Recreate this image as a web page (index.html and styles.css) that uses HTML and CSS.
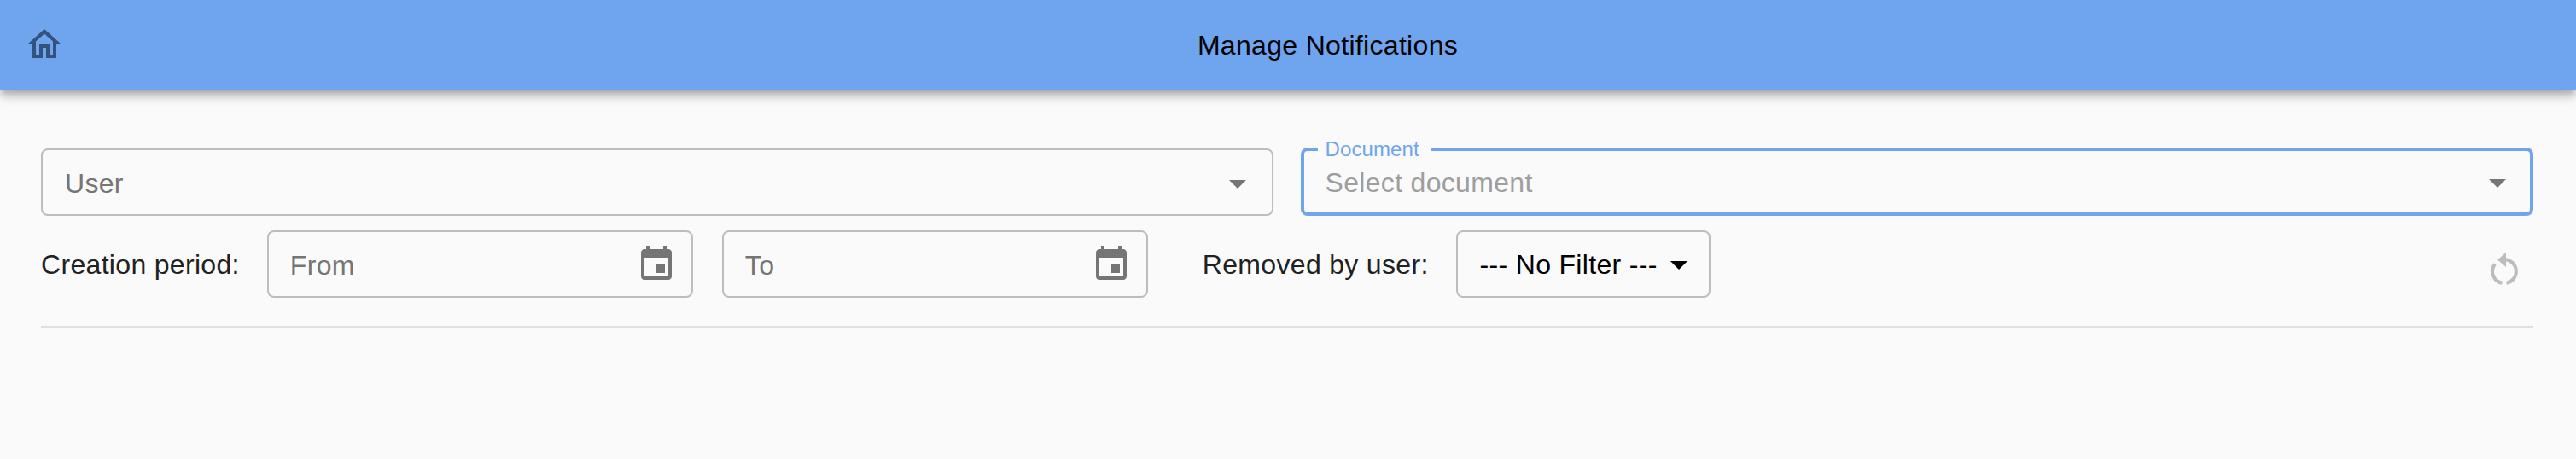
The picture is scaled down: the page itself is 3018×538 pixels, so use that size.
FILE: index.html
```html
<!DOCTYPE html>
<html lang="en">
<head>
<meta charset="utf-8">
<title>Manage Notifications</title>
<link rel="stylesheet" href="styles.css">
</head>
<body>
<header class="toolbar">
  <a class="home" href="#" aria-label="Home">
    <svg class="icon" viewBox="0 0 24 24"><path d="M12 5.69l5 4.5V18h-2v-6H9v6H7v-7.81l5-4.5M12 3L2 12h3v8h6v-6h2v6h6v-8h3L12 3z"/></svg>
  </a>
  <h1 class="title">Manage Notifications</h1>
</header>
<main class="content">
  <div class="row-selects">
    <div class="field">
      <span class="value">User</span>
      <svg class="icon arrow" viewBox="0 0 24 24"><path d="M7 10l5 5 5-5z"/></svg>
    </div>
    <div class="field focused">
      <span class="float-label">Document</span>
      <span class="value faint">Select document</span>
      <svg class="icon arrow" viewBox="0 0 24 24"><path d="M7 10l5 5 5-5z"/></svg>
    </div>
  </div>
  <div class="row-filters">
    <span class="label">Creation period:</span>
    <div class="field date">
      <span class="value">From</span>
      <svg class="icon calendar" viewBox="0 0 24 24"><path d="M17 12h-5v5h5v-5zM16 1v2H8V1H6v2H5c-1.11 0-1.99.9-1.99 2L3 19c0 1.1.89 2 2 2h14c1.1 0 2-.9 2-2V5c0-1.1-.9-2-2-2h-1V1h-2zm3 18H5V8h14v11z"/></svg>
    </div>
    <div class="field date">
      <span class="value">To</span>
      <svg class="icon calendar" viewBox="0 0 24 24"><path d="M17 12h-5v5h5v-5zM16 1v2H8V1H6v2H5c-1.11 0-1.99.9-1.99 2L3 19c0 1.1.89 2 2 2h14c1.1 0 2-.9 2-2V5c0-1.1-.9-2-2-2h-1V1h-2zm3 18H5V8h14v11z"/></svg>
    </div>
    <span class="label removed">Removed by user:</span>
    <div class="field filter">
      <span class="value dark">--- No Filter ---</span>
      <svg class="icon arrow-dark" viewBox="0 0 24 24"><path d="M7 10l5 5 5-5z"/></svg>
    </div>
    <button class="reset" type="button" aria-label="Reset">
      <svg class="icon" viewBox="0 0 48 48">
        <path class="ring" d="M26 10.2A14 14 0 0 1 26.5 37.8M21.5 37.8A14 14 0 0 1 13 15.4"/>
        <path d="M26 2L16 10.5L26 19z"/>
      </svg>
    </button>
  </div>
  <hr class="divider">
</main>
</body>
</html>
```

FILE: styles.css
```css
* { box-sizing: border-box; }
html, body { margin: 0; height: 100%; }
body {
  background: #fafafa;
  font-family: "Liberation Sans", Arial, sans-serif;
  font-size: 32px;
  letter-spacing: .32px;
  color: #212121;
  overflow: hidden;
}
.icon { display: block; width: 48px; height: 48px; flex: none; }

.toolbar {
  display: flex;
  align-items: center;
  height: 106px;
  padding-left: 28px;
  background: #6fa5ee;
  box-shadow: 0 4px 8px -2px rgba(0,0,0,.2), 0 8px 10px 0 rgba(0,0,0,.14), 0 2px 20px 0 rgba(0,0,0,.12);
}
.home {
  display: block;
  margin: 0 17px 2px 0;
  fill: #34527b;
}
.title {
  flex: 1;
  margin: 0;
  font-size: 32px;
  font-weight: 400;
  text-align: center;
  color: #000;
}

.content { padding: 68px 50px 0 48px; }

.row-selects { display: flex; gap: 32px; }
.row-filters { display: flex; align-items: center; margin-top: 17px; }

.field {
  position: relative;
  display: flex;
  align-items: center;
  justify-content: space-between;
  height: 79px;
  border: 2px solid #bdbdbd;
  border-radius: 8px;
  padding: 0 16px 0 26px;
}
.row-selects .field { flex: 1; }
.field.focused {
  height: 80px;
  margin-top: -1px;
  border: 4px solid #6fa5ee;
  padding: 0 14px 0 25px;
}
.float-label {
  position: absolute;
  left: 16px;
  top: -16px;
  padding: 0 14px 0 9px;
  background: #fafafa;
  color: #6fa5ee;
  font-size: 24px;
  letter-spacing: .1px;
  line-height: 28px;
}
.value { padding-top: 4px; color: #757575; }
.value.faint { padding-top: 3px; color: #9e9e9e; }
.value.dark { padding-top: 2px; color: #000; white-space: nowrap; }
.arrow { margin-top: 2px; fill: #757575; }
.arrow-dark { fill: #000; }
.calendar { margin: 1px 1px 0 0; fill: #757575; }

.label { padding-top: 2px; white-space: nowrap; }
.date { width: 499px; margin-left: 34px; padding-left: 25px; }
.label + .date { margin-left: 32px; }
.removed { margin-left: 64px; }
.filter { width: 298px; margin-left: 32px; padding-right: 11px; }

.reset {
  align-self: flex-start;
  margin: 24px 10px 0 auto;
  padding: 0;
  border: 0;
  background: none;
  fill: #bdbdbd;
}
.ring { fill: none; stroke: #bdbdbd; stroke-width: 4; }

.divider {
  height: 2px;
  margin: 33px 0 0;
  border: 0;
  background: #e0e0e0;
}
```
